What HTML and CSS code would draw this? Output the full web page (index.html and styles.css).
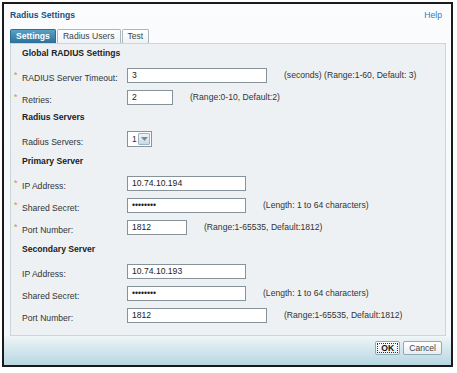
FILE: index.html
```html
<!DOCTYPE html>
<html>
<head>
    <title>Radius Settings</title>
    <link rel="stylesheet" href="styles.css">
</head>
<body>

    <div class="dialog">
        <div class="dialog-header">
            <span class="dialog-title">Radius Settings</span>
            <a class="help-link" href="#">Help</a>
        </div>

        <div class="tabs">
            <span class="tab tab-active">Settings</span>
            <span class="tab">Radius Users</span>
            <span class="tab">Test</span>
        </div>

        <div class="tab-panel">
            <div class="section-title">Global RADIUS Settings</div>
            <div class="form-row">
                <span class="req">*</span>
                <label class="field-label">RADIUS Server Timeout:</label>
                <input class="field w-long" type="text" value="3">
                <span class="hint">(seconds) (Range:1-60, Default: 3)</span>
            </div>
            <div class="form-row">
                <span class="req">*</span>
                <label class="field-label">Retries:</label>
                <input class="field w-tiny" type="text" value="2">
                <span class="hint">(Range:0-10, Default:2)</span>
            </div>

            <div class="section-title">Radius Servers</div>
            <div class="form-row">
                <span class="req"></span>
                <label class="field-label">Radius Servers:</label>
                <div class="combo">
                    <span class="combo-value">1</span>
                    <span class="combo-btn">
                        <svg width="7" height="4" viewBox="0 0 7 4"><path d="M0 0h7L3.5 4z" fill="#7d8a92"/></svg>
                    </span>
                </div>
            </div>

            <div class="section-title tall">Primary Server</div>
            <div class="form-row">
                <span class="req">*</span>
                <label class="field-label">IP Address:</label>
                <input class="field w-mid" type="text" value="10.74.10.194">
            </div>
            <div class="form-row">
                <span class="req">*</span>
                <label class="field-label">Shared Secret:</label>
                <input class="field w-mid" type="password" value="secret12">
                <span class="hint">(Length: 1 to 64 characters)</span>
            </div>
            <div class="form-row">
                <span class="req">*</span>
                <label class="field-label">Port Number:</label>
                <input class="field w-short" type="text" value="1812">
                <span class="hint">(Range:1-65535, Default:1812)</span>
            </div>

            <div class="section-title tall">Secondary Server</div>
            <div class="form-row">
                <span class="req"></span>
                <label class="field-label">IP Address:</label>
                <input class="field w-mid" type="text" value="10.74.10.193">
            </div>
            <div class="form-row">
                <span class="req"></span>
                <label class="field-label">Shared Secret:</label>
                <input class="field w-mid" type="password" value="secret12">
                <span class="hint">(Length: 1 to 64 characters)</span>
            </div>
            <div class="form-row">
                <span class="req"></span>
                <label class="field-label">Port Number:</label>
                <input class="field w-long" type="text" value="1812">
                <span class="hint">(Range:1-65535, Default:1812)</span>
            </div>
        </div>

        <div class="dialog-footer">
            <button class="btn btn-ok">OK</button>
            <button class="btn">Cancel</button>
        </div>
    </div>

</body>
</html>
```

FILE: styles.css
```css
body {
    margin: 0;
    font-family: "Liberation Sans", Arial, sans-serif;
    font-size: 8.6px;
    color: #333;
    background-color: #fff;
}

.dialog {
    margin: 2px;
    width: 436px;
    height: 361px;
    border: 2px solid #1a1a1a;
    padding: 0 5px 0 6px;
    background: linear-gradient(to bottom, #fafcfd 0, #f4f8fa 330px, #dfecf1 340px, #b7d7e1 100%);
    display: flex;
    flex-direction: column;
}

.dialog-header {
    height: 25px;
    line-height: 22px;
    display: flex;
    justify-content: space-between;
    padding-right: 4px;
}

.dialog-title {
    font-weight: bold;
    color: #1d4e7c;
}

.help-link {
    color: #2f78bd;
    text-decoration: none;
}

.tabs {
    display: flex;
    height: 14px;
}

.tab {
    height: 13px;
    line-height: 13px;
    padding: 0 5px;
    margin-right: 1px;
    border: 1px solid #a8b6bf;
    border-bottom: none;
    border-radius: 2px 2px 0 0;
    background: linear-gradient(to bottom, #ffffff, #eef2f4);
    color: #444;
}

.tab-active {
    font-weight: bold;
    color: #fff;
    border-color: #2c6d93;
    background: linear-gradient(to bottom, #5aa2c8, #2b7099);
}

.tab-panel {
    height: 291px;
    border: 1px solid #cbd5db;
    background-color: #edf1f4;
}

.section-title {
    height: 20px;
    line-height: 18px;
    padding-left: 11px;
    font-weight: bold;
    color: #222;
}

.section-title.tall {
    height: 22px;
    line-height: 22px;
}

.form-row {
    display: flex;
    align-items: center;
    height: 22px;
}

.req {
    width: 8px;
    padding-left: 3px;
    color: #f0892a;
    align-self: flex-start;
    margin-top: 6px;
    font-size: 9px;
}

.field-label {
    width: 105px;
    margin-top: 6px;
    color: #333;
}

.field {
    height: 15px;
    box-sizing: border-box;
    border: 1px solid #86939b;
    padding: 0 4px;
    font-family: "Liberation Sans", Arial, sans-serif;
    font-size: 8.6px;
    color: #222;
    background-color: #fff;
}

.w-long {
    width: 140px;
}

.w-mid {
    width: 119px;
}

.w-short {
    width: 60px;
}

.w-tiny {
    width: 46px;
}

.hint {
    margin-left: 17px;
    color: #333;
}

.combo {
    display: flex;
    height: 16px;
    width: 25px;
    box-sizing: border-box;
    border: 1px solid #86939b;
    background-color: #fff;
}

.combo-value {
    flex: 1;
    padding-left: 4px;
    line-height: 14px;
}

.combo-btn {
    width: 10px;
    margin: 1px;
    border: 1px solid #9bb3c2;
    border-radius: 1px;
    background: linear-gradient(to bottom, #eef5f9, #c9dbe6);
    display: flex;
    align-items: center;
    justify-content: center;
}

.dialog-footer {
    display: flex;
    justify-content: flex-end;
    gap: 3px;
    padding: 5px 4px 0 0;
}

.btn {
    height: 14px;
    padding: 0 5px;
    border: 1px solid #8fa9b7;
    border-radius: 2px;
    background: linear-gradient(to bottom, #ffffff, #e8eef1);
    font-family: "Liberation Sans", Arial, sans-serif;
    font-size: 8.6px;
    color: #444;
    line-height: 12px;
}

.btn-ok {
    font-weight: bold;
    color: #111;
    outline: 1px dotted #333;
    outline-offset: -3px;
}
```
